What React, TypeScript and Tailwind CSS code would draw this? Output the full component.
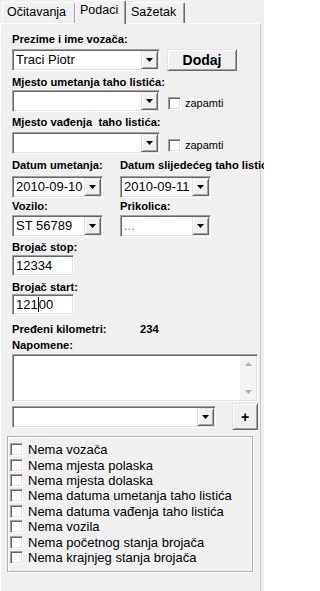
import React from 'react';

const sunken =
  'bg-white border border-t-[#a0a0a0] border-l-[#a0a0a0] border-r-white border-b-white shadow-[inset_1px_1px_0_#696969,inset_-1px_-1px_0_#e3e3e3]';
const raised =
  'bg-[#f0f0f0] border border-t-[#e3e3e3] border-l-[#e3e3e3] border-r-[#696969] border-b-[#696969] shadow-[inset_1px_1px_0_#ffffff,inset_-1px_-1px_0_#a0a0a0]';

function Label({ children, className = '' }: { children: React.ReactNode; className?: string }) {
  return (
    <div className={`h-[14px] leading-[14px] text-[11.2px] font-bold text-black whitespace-nowrap shrink-0 ${className}`}>
      {children}
    </div>
  );
}

function Arrow() {
  return (
    <svg width="7" height="4" viewBox="0 0 7 4">
      <path d="M0 0h7l-3.5 4z" fill="#000" />
    </svg>
  );
}

function Combo({ value, width, muted }: { value?: string; width: string; muted?: boolean }) {
  return (
    <div className={`${sunken} ${width} h-[22px] shrink-0 flex p-px`}>
      <div
        className={`flex-1 pl-[2px] text-[13px] leading-[18px] whitespace-nowrap overflow-hidden ${
          muted ? 'text-[#808080]' : 'text-black'
        }`}
      >
        {value}
      </div>
      <div className={`${raised} w-[17px] flex items-center justify-center`}>
        <Arrow />
      </div>
    </div>
  );
}

function Check({ className = '' }: { className?: string }) {
  return <div className={`${sunken} w-[13px] h-[13px] shrink-0 ${className}`} />;
}

function Remember() {
  return (
    <div className="flex items-center ml-[8px] mt-[4px]">
      <Check />
      <span className="ml-[4px] text-[11px] text-black">zapamti</span>
    </div>
  );
}

const flags = [
  'Nema vozača',
  'Nema mjesta polaska',
  'Nema mjesta dolaska',
  'Nema datuma umetanja taho listića',
  'Nema datuma vađenja taho listića',
  'Nema vozila',
  'Nema početnog stanja brojača',
  'Nema krajnjeg stanja brojača',
];

export default function App() {
  return (
    <div className="w-[264px] h-[591px] overflow-hidden bg-[#f0f0f0] font-['Liberation_Sans',Arial,sans-serif] text-black select-none">
      {/* Tabs */}
      <div className="flex items-end h-[23px] pl-[2px]">
        <div className="w-[73px] h-[21px] border border-t-white border-l-white border-r-[#a0a0a0] border-b-0 rounded-t-[2px] pl-[4px] text-[12.5px] leading-[19px]">
          Očitavanja
        </div>
        <div className="relative z-10 w-[51px] h-[24px] -mb-px bg-[#f0f0f0] border border-t-white border-l-white border-r-[#696969] border-b-0 rounded-t-[2px] pl-[4px] text-[12.5px] leading-[18px] shadow-[inset_-1px_0_0_#a0a0a0]">
          Podaci
        </div>
        <div className="w-[59px] h-[21px] border border-t-white border-l-0 border-r-[#696969] border-b-0 rounded-t-[2px] pl-[5px] text-[12.5px] leading-[19px] shadow-[inset_-1px_0_0_#a0a0a0]">
          Sažetak
        </div>
      </div>

      {/* Panel */}
      <div className="w-[261px] h-[568px] border-t border-l border-r border-t-white border-l-white border-r-[#c8c8c8] pl-[11px] flex flex-col">
        <Label className="mt-[8px]">Prezime i ime vozača:</Label>
        <div className="flex mt-[3px]">
          <Combo value="Traci Piotr" width="w-[148px]" />
          <div className={`${raised} ml-[7px] w-[70px] h-[22px] flex items-center justify-center text-[14px] font-bold`}>
            Dodaj
          </div>
        </div>

        <Label className="mt-[4px]">Mjesto umetanja taho listića:</Label>
        <div className="flex mt-[1px]">
          <Combo width="w-[148px]" />
          <Remember />
        </div>

        <Label className="mt-[3px]">Mjesto vađenja&nbsp; taho listića:</Label>
        <div className="flex mt-[3px]">
          <Combo width="w-[148px]" />
          <Remember />
        </div>

        <div className="flex mt-[4px]">
          <Label className="w-[108px]">Datum umetanja:</Label>
          <Label>Datum slijedećeg taho listića:</Label>
        </div>
        <div className="flex mt-[4px]">
          <Combo value="2010-09-10" width="w-[91px]" />
          <div className="ml-[17px]">
            <Combo value="2010-09-11" width="w-[91px]" />
          </div>
        </div>

        <div className="flex mt-[1px]">
          <Label className="w-[108px]">Vozilo:</Label>
          <Label>Prikolica:</Label>
        </div>
        <div className="flex mt-[2px]">
          <Combo value="ST 56789" width="w-[91px]" />
          <div className="ml-[17px]">
            <Combo value="..." width="w-[91px]" muted />
          </div>
        </div>

        <Label className="mt-[3px]">Brojač stop:</Label>
        <div className={`${sunken} mt-[1px] w-[62px] h-[21px] pl-[3px] text-[13px] leading-[19px]`}>12334</div>

        <Label className="mt-[4px]">Brojač start:</Label>
        <div className={`${sunken} w-[62px] h-[21px] pl-[3px] text-[13px] leading-[19px] flex items-center`}>
          <span>121</span>
          <span className="w-px h-[15px] bg-black" />
          <span>00</span>
        </div>

        <div className="flex mt-[7px]">
          <Label className="w-[128px]">Pređeni kilometri:</Label>
          <Label>234</Label>
        </div>
        <Label className="mt-[2px]">Napomene:</Label>

        <div className={`${sunken} mt-[2px] w-[246px] h-[48px] flex justify-end p-px`}>
          <div className="w-[16px] h-full bg-[#f4f4f4] flex flex-col items-center justify-between py-[6px]">
            <svg width="7" height="4" viewBox="0 0 7 4">
              <path d="M0 4h7l-3.5-4z" fill="#b0b0b0" />
            </svg>
            <svg width="7" height="4" viewBox="0 0 7 4">
              <path d="M0 0h7l-3.5 4z" fill="#b0b0b0" />
            </svg>
          </div>
        </div>

        <div className="flex items-center mt-[1px] h-[27px]">
          <Combo width="w-[204px]" />
          <div className={`${raised} ml-[16px] w-[26px] h-[27px] flex items-center justify-center text-[14px] font-bold leading-none`}>
            +
          </div>
        </div>

        <div className="mt-[6px] -ml-[5px] w-[246px] h-[136px] border border-[#b4b4b4] shadow-[inset_1px_1px_0_#ffffff,1px_1px_0_#ffffff] pt-[5px] pl-[2px]">
          {flags.map((f) => (
            <div key={f} className="h-[15.4px] flex items-center">
              <Check />
              <span className="ml-[5px] text-[13px] leading-[15px] whitespace-nowrap">{f}</span>
            </div>
          ))}
        </div>
      </div>
    </div>
  );
}
